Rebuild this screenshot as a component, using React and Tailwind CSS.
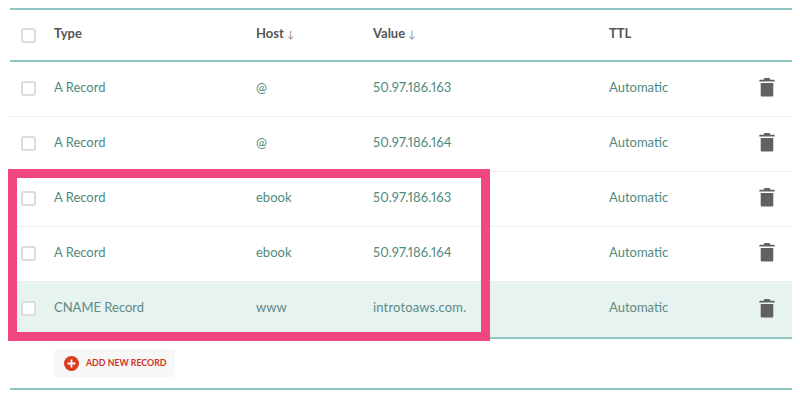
const rows = [
  { host: "@", value: "50.97.186.163" },
  { host: "@", value: "50.97.186.164" },
  { host: "ebook", value: "50.97.186.163" },
  { host: "ebook", value: "50.97.186.164" },
];

function Check() {
  return <span className="block w-[15px] h-[15px] rounded-[3px] border-2 border-[#d9dddc] bg-white" />;
}

function Trash() {
  return (
    <svg width="16" height="20" viewBox="0 0 16 20" className="text-[#616161] mb-[4px]" fill="currentColor">
      <path d="M5.5 1h5l1 1.8H15a.7.7 0 0 1 .7.7v1H.3v-1a.7.7 0 0 1 .7-.7h3.5z" />
      <path d="M1.7 6h12.6v12.3a1.2 1.2 0 0 1-1.2 1.2H2.9a1.2 1.2 0 0 1-1.2-1.2z" />
    </svg>
  );
}

function Row({ type, host, value, last }) {
  const cell = last ? "pb-[3px]" : "pb-[2px]";
  return (
    <div className={`flex items-center h-[55px] text-[13px] ${last ? "bg-[#e6f3f1] text-[#5f8a83]" : "border-b border-[#eeeeee] text-[#4f8a80]"}`}>
      <div className={`w-[44px] pl-[11px] ${cell}`}><Check /></div>
      <div className={`w-[202px] ${cell}`}>{type}</div>
      <div className={`w-[117px] ${cell}`}>{host}</div>
      <div className={`w-[236px] tracking-[0.15px] proportional-nums ${cell}`}>{value}</div>
      <div className={`w-[150px] ${cell}`}>Automatic</div>
      <Trash />
    </div>
  );
}

export default function App() {
  return (
    <div className="relative w-[800px] h-[400px] bg-white overflow-hidden font-['Lato','Open_Sans',sans-serif] pt-[8px] pl-[10px] pr-[8px]">
      <div className="border-t-2 border-[#8fc5c4]">
        <div className="flex items-center h-[50px] text-[13px] font-bold text-[#555555] border-b-2 border-[#8fc5c4] box-content">
          <div className="w-[44px] pl-[11px] pt-[1px]"><Check /></div>
          <div className="w-[202px] pb-[3px]">Type</div>
          <div className="w-[117px] pb-[3px]">Host <span className="font-normal text-[10px] text-[#888888]">↓</span></div>
          <div className="w-[236px] pb-[3px]">Value <span className="font-normal text-[10px] text-[#888888]">↓</span></div>
          <div className="pb-[3px]">TTL</div>
        </div>
        {rows.map((r, i) => (
          <Row key={i} type="A Record" host={r.host} value={r.value} />
        ))}
        <Row type="CNAME Record" host="www" value="introtoaws.com." last />
        <div className="border-t-2 border-b-2 border-[#8fc5c4] pl-[44px] pt-[10px] h-[39px] box-content">
          <button className="flex items-center h-[28px] w-[121px] pl-[10px] gap-[7px] rounded-[3px] bg-[#f7f7f7] text-[#d0341f] text-[8.8px] font-bold">
            <svg width="15" height="15" viewBox="0 0 15 15">
              <circle cx="7.5" cy="7.5" r="7.5" fill="#dd3a1f" />
              <path d="M7.5 3.5v8M3.5 7.5h8" stroke="#fff" strokeWidth="1.8" />
            </svg>
            ADD NEW RECORD
          </button>
        </div>
      </div>
      <div className="absolute left-[8px] top-[169px] w-[482px] h-[172px] border-[9px] border-[#f2477e]" />
    </div>
  );
}
